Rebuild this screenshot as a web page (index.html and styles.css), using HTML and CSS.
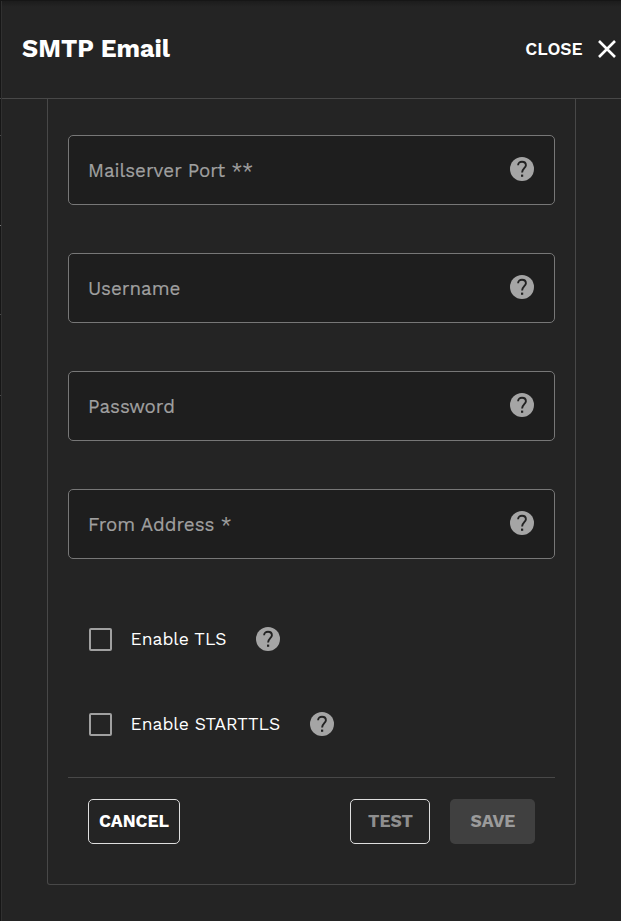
FILE: index.html
```html
<!DOCTYPE html>
<html lang="en">
<head>
<meta charset="utf-8">
<title>SMTP Email</title>
<link rel="stylesheet" href="styles.css">
</head>
<body>
<svg width="0" height="0" class="defs">
  <symbol id="help" viewBox="0 0 24 24"><circle cx="12" cy="12" r="12"/><path class="mark" d="M8.100 8.300C8.100 5.900 9.800 4.700 12 4.700S15.900 6.100 15.900 8.200C15.900 11 12.100 11.600 12.100 15.600"/><path class="dot" d="M11 17.600h2.200v2.200H11z"/></symbol>
</svg>
<aside class="panel">
  <header class="header">
    <h1 class="title">SMTP Email</h1>
    <button class="close"><span class="close-text">CLOSE</span><svg class="cross" viewBox="0 0 18 18"><path d="M1 1L17 17M17 1L1 17"/></svg></button>
  </header>
  <form class="card">
    <div class="field"><label class="label">Mailserver Port **</label><svg class="help"><use href="#help"/></svg></div>
    <div class="field"><label class="label">Username</label><svg class="help"><use href="#help"/></svg></div>
    <div class="field"><label class="label">Password</label><svg class="help"><use href="#help"/></svg></div>
    <div class="field"><label class="label">From Address *</label><svg class="help"><use href="#help"/></svg></div>
    <div class="check"><span class="box"></span><span class="check-text tls">Enable TLS</span><svg class="help"><use href="#help"/></svg></div>
    <div class="check"><span class="box"></span><span class="check-text starttls">Enable STARTTLS</span><svg class="help"><use href="#help"/></svg></div>
    <footer class="actions">
      <button type="button" class="btn cancel">CANCEL</button>
      <button type="button" class="btn test">TEST</button>
      <button type="button" class="btn save">SAVE</button>
    </footer>
  </form>
</aside>
</body>
</html>
```
FILE: styles.css
```css
* { box-sizing: border-box; }
body {
  margin: 0; height: 921px; padding: 1px 0 0 1px; overflow: hidden; color: #fff; font-family: "Work Sans", Inter, sans-serif;
  /* row separators of the page behind the panel */
  background:
    linear-gradient(#484848, #484848) 0 98px / 1px 1px no-repeat,
    linear-gradient(#484848, #484848) 0 135px / 1px 1px no-repeat,
    linear-gradient(#777, #777) 0 225px / 1px 1px no-repeat,
    linear-gradient(#484848, #484848) 0 314px / 1px 1px no-repeat,
    linear-gradient(#484848, #484848) 0 395px / 1px 1px no-repeat,
    #161616;
}
.defs { position: absolute; }
.panel { height: 920px; border-left: 1px solid #303030; background: linear-gradient(#1c1c1c, #242424 6px); }
.header { display: flex; justify-content: space-between; align-items: center; height: 98px; padding: 0 5px 2px 20px; border-bottom: 1px solid #484848; }
.title { margin: 0; font-size: 25px; line-height: 30px; font-weight: 700; }
.close { display: flex; align-items: center; padding: 1px 0 0; border: 0; background: none; color: #fff; font: 600 17.5px/20px "Work Sans", Inter, sans-serif; }
.close-text { width: 58px; margin-right: 15px; white-space: nowrap; }
.cross { width: 18px; height: 18px; fill: none; stroke: #fff; stroke-width: 2.6; }
.card { width: 529px; height: 786px; margin-left: 45px; padding: 36px 20px 0; border: 1px solid #484848; border-top: 0; border-radius: 0 0 3px 3px; }
.field { display: flex; align-items: center; justify-content: space-between; height: 70px; margin-bottom: 48px; padding: 0 20.5px 2px 19px; border: 1px solid #777; border-radius: 5px; background: #1e1e1e; }
.label { color: #a0a0a0; font-size: 18.75px; font-weight: 450; -webkit-text-stroke: .2px #a0a0a0; line-height: 24px; white-space: nowrap; padding-top: 3px; }
.help { flex: none; width: 24px; height: 24px; fill: #a5a5a5; }
.mark { fill: none; stroke: #222; stroke-width: 1.9; }
.dot { fill: #222; }
.check { display: flex; align-items: center; height: 25px; margin: 68px 0 60px 21px; }
.check + .check { margin: 0 0 40px 21px; }
.box { width: 23px; height: 23px; margin-right: 18.500px; border: 2px solid #a0a0a0; border-radius: 2px; }
.check-text { font-size: 17.5px; line-height: 24px; white-space: nowrap; padding-bottom: 1px; }
.check .help { margin-bottom: 1px; }
.tls { width: 125.5px; }
.starttls { width: 179.5px; }
.actions { display: flex; padding: 21px 20px 0; border-top: 1px solid #484848; }
.btn { height: 45px; padding: 0 0 1px; border: 1px solid #dedede; border-radius: 5px; background: none; color: #fff; font: 700 17.5px/20px "Work Sans", Inter, sans-serif; }
.cancel { width: 92px; }
.test { width: 80px; margin-left: auto; padding-left: 1px; color: #8e8e8e; }
.save { width: 85px; margin-left: 20px; padding-left: 1px; border: 0; background: #404040; color: #9b9b9b; }
```
